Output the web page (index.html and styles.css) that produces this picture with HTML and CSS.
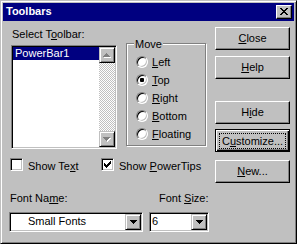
FILE: index.html
```html
<!DOCTYPE html>
<html lang="en">
<head>
    <meta charset="UTF-8">
    <title>Toolbars</title>
    <link rel="stylesheet" href="styles.css">
</head>
<body>
    <div class="window">
        <div class="titlebar">
            <span class="title">Toolbars</span>
            <span class="close-x">
                <svg width="8" height="7" viewBox="0 0 8 7" shape-rendering="crispEdges"><path d="M0 0h2v1H0zM6 0h2v1H6zM1 1h2v1H1zM5 1h2v1H5zM2 2h4v1H2zM3 3h2v1H3zM2 4h4v1H2zM1 5h2v1H1zM5 5h2v1H5zM0 6h2v1H0zM6 6h2v1H6z" fill="#000"/></svg>
            </span>
        </div>

        <div class="client">
            <div class="left">
                <div class="top-row">
                    <!-- liste des barres -->
                    <div class="picker">
                        <div class="label">Select T<u>o</u>olbar:</div>
                        <div class="listbox">
                            <div class="items">
                                <div class="item selected">PowerBar1</div>
                            </div>
                            <div class="scrollbar">
                                <div class="sb-btn">
                                    <svg width="8" height="5" viewBox="0 0 8 5" shape-rendering="crispEdges"><path d="M4 1h1v1H4zM3 2h3v1H3zM2 3h5v1H2zM1 4h7v1H1z" fill="#fff"/><path d="M3 0h1v1H3zM2 1h3v1H2zM1 2h5v1H1zM0 3h7v1H0z" fill="#808080"/></svg>
                                </div>
                                <div class="sb-track"></div>
                                <div class="sb-btn">
                                    <svg width="8" height="5" viewBox="0 0 8 5" shape-rendering="crispEdges"><path d="M1 1h7v1H1zM2 2h5v1H2zM3 3h3v1H3zM4 4h1v1H4z" fill="#fff"/><path d="M0 0h7v1H0zM1 1h5v1H1zM2 2h3v1H2zM3 3h1v1H3z" fill="#808080"/></svg>
                                </div>
                            </div>
                        </div>
                    </div>

                    <!-- groupe Move -->
                    <div class="group">
                        <div class="group-title">Move</div>
                        <div class="radio-row"><span class="radio"></span><span><u>L</u>eft</span></div>
                        <div class="radio-row"><span class="radio checked"></span><span><u>T</u>op</span></div>
                        <div class="radio-row"><span class="radio"></span><span><u>R</u>ight</span></div>
                        <div class="radio-row"><span class="radio"></span><span><u>B</u>ottom</span></div>
                        <div class="radio-row"><span class="radio"></span><span><u>F</u>loating</span></div>
                    </div>
                </div>

                <div class="checks">
                    <div class="option first">
                        <span class="checkbox"></span>
                        <span class="option-text">Show Te<u>x</u>t</span>
                    </div>
                    <div class="option">
                        <span class="checkbox">
                            <svg width="7" height="7" viewBox="0 0 7 7" shape-rendering="crispEdges"><path d="M0 2h1v3H0zM1 3h1v3H1zM2 4h1v3H2zM3 3h1v3H3zM4 2h1v3H4zM5 1h1v3H5zM6 0h1v3H6z" fill="#000"/></svg>
                        </span>
                        <span class="option-text">Show <u>P</u>owerTips</span>
                    </div>
                </div>

                <div class="fonts">
                    <div class="label">Font Na<u>m</u>e:</div>
                    <div class="label size-label">Font <u>S</u>ize:</div>
                    <div class="combo">
                        <span class="combo-text name-text">Small Fonts</span>
                        <span class="combo-btn">
                            <svg width="7" height="4" viewBox="0 0 7 4" shape-rendering="crispEdges"><path d="M0 0h7v1H0zM1 1h5v1H1zM2 2h3v1H2zM3 3h1v1H3z" fill="#000"/></svg>
                        </span>
                    </div>
                    <div class="combo">
                        <span class="combo-text size-text">6</span>
                        <span class="combo-btn">
                            <svg width="7" height="4" viewBox="0 0 7 4" shape-rendering="crispEdges"><path d="M0 0h7v1H0zM1 1h5v1H1zM2 2h3v1H2zM3 3h1v1H3z" fill="#000"/></svg>
                        </span>
                    </div>
                </div>
            </div>

            <!-- boutons -->
            <div class="buttons">
                <div class="btn"><span><u>C</u>lose</span></div>
                <div class="btn help"><span><u>H</u>elp</span></div>
                <div class="btn hide"><span>H<u>i</u>de</span></div>
                <div class="btn default customize"><span class="focus">C<u>u</u>stomize...</span></div>
                <div class="btn new"><span><u>N</u>ew...</span></div>
            </div>
        </div>
    </div>
</body>
</html>
```

FILE: styles.css
```css
body {
    margin: 0;
    background-color: #c0c0c0;
    font-family: "Liberation Sans", Arial, sans-serif;
    font-size: 11px;
    color: #000;
}
u {
    text-decoration-thickness: 1px;
    text-underline-offset: 1px;
}
.window {
    width: 297px;
    height: 244px;
    box-sizing: border-box;
    border: 1px solid;
    border-color: #c0c0c0 #000 #000 #c0c0c0;
    box-shadow: inset 1px 1px #fff, inset -1px -1px #808080;
    padding: 2px;
    background-color: #c0c0c0;
}
.titlebar {
    height: 18px;
    background-color: #000080;
    display: flex;
    align-items: center;
    justify-content: space-between;
    padding: 0 2px 0 3px;
}
.title {
    color: #fff;
    font-weight: bold;
    line-height: 13px;
    padding-bottom: 1px;
}
.close-x {
    width: 16px;
    height: 14px;
    box-sizing: border-box;
    background-color: #c0c0c0;
    border: 1px solid;
    border-color: #fff #000 #000 #fff;
    box-shadow: inset -1px -1px #808080;
    display: flex;
    align-items: center;
    justify-content: center;
    padding-bottom: 1px;
}
.client {
    display: flex;
    padding: 0 4px 0 6px;
}
.left {
    width: 200px;
    margin-top: 7px;
}
.top-row {
    display: flex;
    align-items: flex-start;
}
.label {
    line-height: 13px;
    padding-left: 1px;
}
.picker {
    margin-left: 2px;
    width: 106px;
}
.listbox {
    margin-top: 4px;
    width: 106px;
    height: 104px;
    box-sizing: border-box;
    display: flex;
    background-color: #fff;
    border: 1px solid;
    border-color: #808080 #fff #fff #808080;
    box-shadow: inset 1px 1px #000, inset -1px -1px #c0c0c0;
    padding: 1px;
}
.items {
    flex: 1;
}
.item {
    height: 13px;
    line-height: 13px;
    padding-left: 2px;
}
.item.selected {
    background-color: #000080;
    color: #fff;
}
.scrollbar {
    width: 16px;
    display: flex;
    flex-direction: column;
}
.sb-btn {
    height: 16px;
    box-sizing: border-box;
    background-color: #c0c0c0;
    border: 1px solid;
    border-color: #c0c0c0 #000 #000 #c0c0c0;
    box-shadow: inset 1px 1px #fff, inset -1px -1px #808080;
    display: flex;
    align-items: center;
    justify-content: center;
}
.sb-track {
    flex: 1;
    background: repeating-conic-gradient(#fff 0 25%, #c0c0c0 0 50%) 0 0 / 2px 2px;
}
.group {
    margin: 15px 0 0 9px;
    width: 80px;
    height: 103px;
    box-sizing: border-box;
    border: 1px solid #808080;
    box-shadow: 1px 1px #fff, inset 1px 1px #fff;
}
.group-title {
    display: table;
    margin: -6px 0 0 7px;
    padding: 0 1px;
    line-height: 13px;
    background-color: #c0c0c0;
}
.radio-row {
    display: flex;
    align-items: center;
    height: 18px;
    padding-left: 9px;
    gap: 4px;
    line-height: 13px;
}
.radio-row:first-of-type {
    margin-top: 2px;
}
.group-title + .radio-row {
    margin-top: 2px;
}
.radio {
    width: 12px;
    height: 12px;
    box-sizing: border-box;
    border-radius: 50%;
    border: 1px solid;
    border-color: #808080 #fff #fff #808080;
    box-shadow: inset 1px 1px #000, inset -1px -1px #c0c0c0;
    background-color: #fff;
    display: flex;
    align-items: center;
    justify-content: center;
}
.radio.checked::after {
    content: "";
    width: 4px;
    height: 4px;
    border-radius: 1px;
    background-color: #000;
}
.checks {
    display: flex;
    margin-top: 9px;
    padding-left: 1px;
}
.option {
    display: flex;
    align-items: flex-start;
    gap: 5px;
}
.option.first {
    width: 91px;
}
.option-text {
    line-height: 13px;
    padding-top: 2px;
}
.checkbox {
    width: 13px;
    height: 13px;
    box-sizing: border-box;
    background-color: #fff;
    border: 1px solid;
    border-color: #808080 #fff #fff #808080;
    box-shadow: inset 1px 1px #000, inset -1px -1px #c0c0c0;
    display: flex;
    align-items: center;
    justify-content: center;
}
.fonts {
    display: grid;
    grid-template-columns: 134px 60px;
    column-gap: 6px;
    margin-top: 19px;
}
.size-label {
    padding-left: 10px;
}
.combo {
    margin-top: 7px;
    height: 20px;
    box-sizing: border-box;
    display: flex;
    background-color: #fff;
    border: 1px solid;
    border-color: #808080 #fff #fff #808080;
    box-shadow: inset 1px 1px #000, inset -1px -1px #c0c0c0;
    padding: 1px;
}
.combo-text {
    flex: 1;
    line-height: 13px;
    padding-top: 1px;
}
.name-text {
    padding-left: 17px;
}
.size-text {
    padding-left: 1px;
}
.combo-btn {
    width: 16px;
    box-sizing: border-box;
    background-color: #c0c0c0;
    border: 1px solid;
    border-color: #c0c0c0 #000 #000 #c0c0c0;
    box-shadow: inset 1px 1px #fff, inset -1px -1px #808080;
    display: flex;
    align-items: center;
    justify-content: center;
}
.buttons {
    width: 75px;
    margin: 6px 0 0 6px;
    display: flex;
    flex-direction: column;
}
.btn {
    height: 23px;
    box-sizing: border-box;
    border: 1px solid;
    border-color: #fff #000 #000 #fff;
    box-shadow: inset -1px -1px #808080;
    display: flex;
    align-items: center;
    justify-content: center;
    line-height: 13px;
}
.btn.help {
    margin-top: 6px;
}
.btn.hide {
    margin-top: 22px;
}
.btn.customize {
    margin-top: 5px;
}
.btn.new {
    margin-top: 8px;
}
.btn.default {
    border-color: #000;
    box-shadow: inset 1px 1px #fff, inset -1px -1px #000, inset -2px -2px #808080;
    align-items: stretch;
}
.focus {
    flex: 1;
    margin: 3px 3px 2px;
    border: 1px dotted #000;
    display: flex;
    align-items: center;
    justify-content: center;
}
```
